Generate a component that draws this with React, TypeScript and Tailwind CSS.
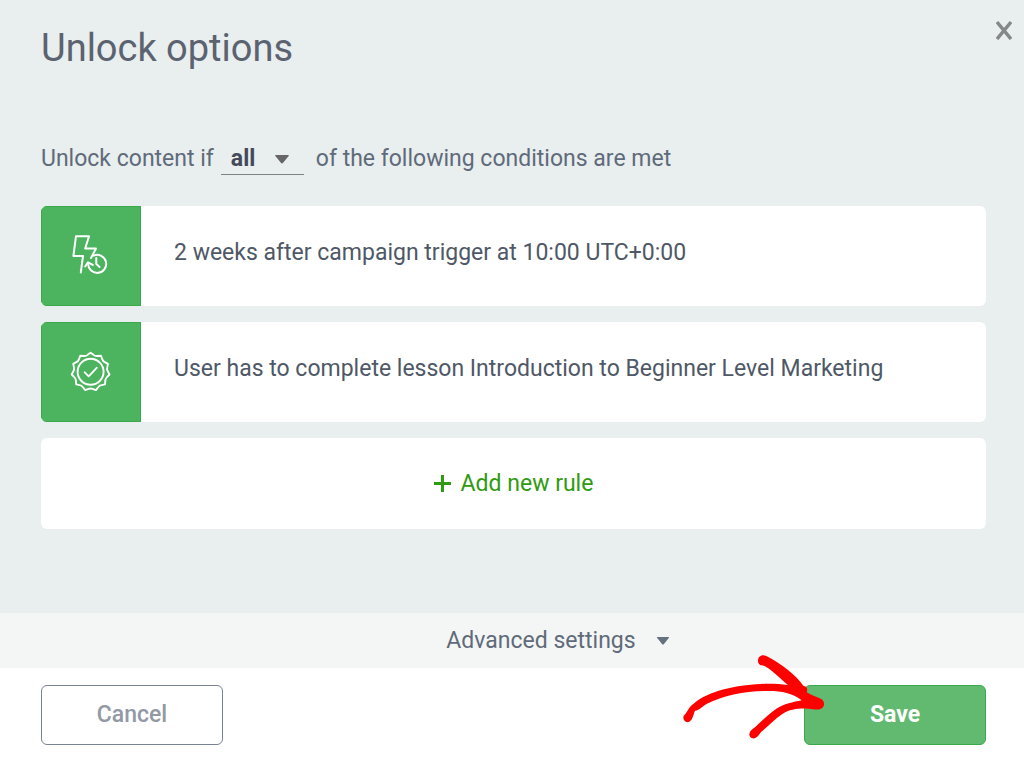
import type { ReactNode } from 'react';

const BADGE_POINTS = 11;

function badgePath(cx: number, cy: number, outer: number, inner: number) {
  const step = (Math.PI * 2) / BADGE_POINTS;
  const at = (radius: number, turn: number) =>
    `${(cx + radius * Math.sin(turn * step)).toFixed(2)} ${(cy - radius * Math.cos(turn * step)).toFixed(2)}`;

  let d = `M${at(outer, 0)}`;
  for (let i = 0; i < BADGE_POINTS; i++) {
    d += `L${at(inner + 0.5, i + 0.3)}Q${at(inner - 0.5, i + 0.5)} ${at(inner + 0.5, i + 0.7)}L${at(outer, i + 1)}`;
  }
  return `${d}Z`;
}

function BadgeIcon() {
  return (
    <svg
      className="size-[60px]"
      viewBox="0 0 60 60"
      fill="none"
      stroke="white"
      strokeWidth="1.9"
      strokeLinecap="round"
      strokeLinejoin="round"
      aria-hidden="true"
    >
      <path d={badgePath(29.6, 29.8, 19.1, 16.7)} />
      <circle cx="29.6" cy="29.8" r="13" />
      <path d="M23.7 30.3 27.7 34.4 35.7 25.8" />
    </svg>
  );
}

function TriggerIcon() {
  return (
    <svg
      className="size-[60px]"
      viewBox="0 0 60 60"
      fill="none"
      stroke="white"
      strokeWidth="2"
      strokeLinecap="round"
      strokeLinejoin="round"
      aria-hidden="true"
    >
      <path d="M19.8 46.5 22 30H12.4L15 10.2H28L24.2 22.5H35L30 32" />
      <path d="M32.7 29.6A9 9 0 1 1 27.2 37.3" />
      <path d="M24.2 40.5 27 36.3 31.8 38.9" />
      <path d="M35.3 32V38.1L38.6 40.9" />
    </svg>
  );
}

function Caret({ className }: { className: string }) {
  return (
    <svg className={className} viewBox="0 0 16 10" fill="currentColor" aria-hidden="true">
      <path d="M1 0H15Q16 0 15.4 1L9 9Q8 10 7 9L.6 1Q0 0 1 0Z" />
    </svg>
  );
}

function PointerArrow() {
  return (
    <svg
      className="pointer-events-none absolute -left-[122px] -top-[31px] h-[86px] w-36"
      viewBox="36 27 432 258"
      fill="#ff0000"
      aria-hidden="true"
    >
      <path d="M264 48C264 34 275 27 289 33C330 54 377 88 400 122L408 125C412 130 413 136 410 142C424 151 441 156 455 163C467 172 464 190 449 193C438 196 426 190 412 191C384 190 359 193 337 207C314 222 294 244 274 260C267 269 260 282 247 280C235 277 235 262 247 253C270 235 289 211 319 191C342 177 370 171 395 166C364 142 331 137 288 138C226 138 159 152 111 176C97 183 89 196 75 197C69 211 68 226 56 231C45 234 37 223 41 212C52 203 55 187 70 177C115 137 195 121 272 117C301 115 329 117 354 120C329 99 307 75 282 62C273 62 264 59 264 48Z" />
    </svg>
  );
}

function Rule({ icon, children }: { icon: ReactNode; children: ReactNode }) {
  return (
    <li className="flex min-h-[100px] overflow-hidden rounded-md bg-white">
      <div className="flex w-[100px] shrink-0 items-center justify-center border border-[#3aa84b] bg-[#4cb35e]">
        {icon}
      </div>
      <p className="flex items-center px-[33px] pb-1.5 text-[#4f5866]">{children}</p>
    </li>
  );
}

export default function App() {
  return (
    <main
      role="dialog"
      aria-labelledby="unlock-title"
      className="flex min-h-screen flex-col bg-[#e9eeee] font-['Roboto',sans-serif] text-[23px] leading-8 text-[#5f6b7a]"
    >
      <header className="flex items-start justify-between pl-[41px] pr-3 pt-5">
        <h1 id="unlock-title" className="pt-1 text-[38px] leading-[48px] text-[#5b6270]">
          Unlock options
        </h1>
        <button type="button" aria-label="Close" className="text-[#858888]">
          <svg className="h-5 w-4" viewBox="0 0 16 20" fill="none" stroke="currentColor" strokeWidth="3.4" aria-hidden="true">
            <path d="M1 2 15 19M15 2 1 19" />
          </svg>
        </button>
      </header>

      <section className="grow pb-[84px] pl-[41px] pr-[38px] pt-[71px]">
        <div className="flex h-8 items-center">
          <label htmlFor="match">Unlock content if</label>
          <div className="relative ml-[7px] mr-3 w-[83px] border-b border-[#7d8283]">
            <select
              id="match"
              defaultValue="all"
              className="block h-[31px] w-full appearance-none bg-transparent pl-2.5 font-bold text-[#434b5a]"
            >
              <option value="all">all</option>
              <option value="any">any</option>
            </select>
            <Caret className="pointer-events-none absolute right-3.5 top-3 h-[9px] w-4 text-[#666]" />
          </div>
          <span>of the following conditions are met</span>
        </div>

        <ul className="mt-[31px] flex flex-col gap-4">
          <Rule icon={<TriggerIcon />}>2 weeks after campaign trigger at 10:00 UTC+0:00</Rule>
          <Rule icon={<BadgeIcon />}>User has to complete lesson Introduction to Beginner Level Marketing</Rule>
          <li>
            <button
              type="button"
              className="flex min-h-[91px] w-full items-center justify-center gap-2.5 rounded-md bg-white text-[#2f9b10]"
            >
              <svg className="size-[17px]" viewBox="0 0 17 17" stroke="currentColor" strokeWidth="3" aria-hidden="true">
                <path d="M8.5 0V17M0 8.5H17" />
              </svg>
              Add new rule
            </button>
          </li>
        </ul>
      </section>

      <button type="button" className="flex h-[55px] items-center justify-center gap-5 bg-[#f4f6f5] pl-[92px]">
        Advanced settings
        <Caret className="h-2 w-3.5 text-[#66717f]" />
      </button>

      <footer className="flex items-center justify-between bg-white pb-[13px] pl-[41px] pr-[38px] pt-[17px] font-medium">
        <button type="button" className="h-[60px] w-[182px] rounded-md border border-[#788291] text-[#9299a5]">
          Cancel
        </button>
        <div className="relative">
          <button type="button" className="h-[60px] w-[182px] rounded-md border border-[#3aa84b] bg-[#61ba70] font-bold text-white">
            Save
          </button>
          <PointerArrow />
        </div>
      </footer>
    </main>
  );
}
